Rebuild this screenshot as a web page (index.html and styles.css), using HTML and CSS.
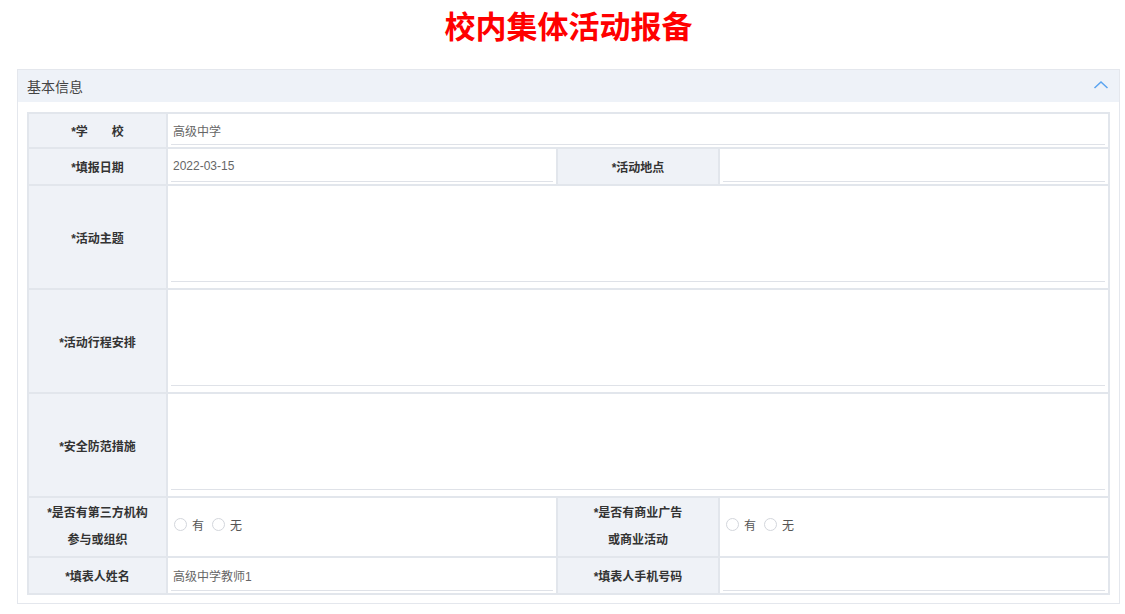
FILE: index.html
```html
<!DOCTYPE html>
<html lang="zh-CN">
<head>
<meta charset="utf-8">
<title>校内集体活动报备</title>
<link rel="stylesheet" href="styles.css">
</head>
<body>
<div class="page">
  <h1 class="title">校内集体活动报备</h1>
  <section class="panel">
    <div class="panel-head">
      <span class="panel-title">基本信息</span>
      <svg class="chevron" width="16" height="10" viewBox="0 0 16 10"><path d="M1.5 8 L8 2 L14.5 8" fill="none" stroke="#5aa4f0" stroke-width="1.5"/></svg>
    </div>
    <div class="panel-body">
      <div class="form">
        <div class="lab r1">*学　　校</div>
        <div class="val span3 r1"><div class="inp">高级中学</div></div>

        <div class="lab r2">*填报日期</div>
        <div class="val r2"><div class="inp">2022-03-15</div></div>
        <div class="lab r2">*活动地点</div>
        <div class="val r2"><div class="inp"></div></div>

        <div class="lab tall">*活动主题</div>
        <div class="val span3 tall"><div class="inp area"></div></div>

        <div class="lab tall">*活动行程安排</div>
        <div class="val span3 tall"><div class="inp area"></div></div>

        <div class="lab tall">*安全防范措施</div>
        <div class="val span3 tall"><div class="inp area"></div></div>

        <div class="lab two r6">*是否有第三方机构<br>参与或组织</div>
        <div class="val radios r6">
          <label class="radio"><span class="dot"></span>有</label>
          <label class="radio"><span class="dot"></span>无</label>
        </div>
        <div class="lab two r6">*是否有商业广告<br>或商业活动</div>
        <div class="val radios r6">
          <label class="radio"><span class="dot"></span>有</label>
          <label class="radio"><span class="dot"></span>无</label>
        </div>

        <div class="lab r7">*填表人姓名</div>
        <div class="val r7"><div class="inp">高级中学教师1</div></div>
        <div class="lab r7">*填表人手机号码</div>
        <div class="val r7"><div class="inp"></div></div>
      </div>
    </div>
  </section>
</div>
</body>
</html>
```

FILE: styles.css
```css
* { box-sizing: border-box; }
html, body {
  margin: 0;
  padding: 0;
  background: #ffffff;
  font-family: "Liberation Sans", "Noto Sans CJK SC", sans-serif;
  color: #333;
}
.page {
  padding: 0 5px 0 17px;
}
.title {
  margin: 9px 0 0 0;
  height: 60px;
  font-family: "Noto Sans CJK SC", sans-serif;
  font-size: 31px;
  line-height: 31px;
  font-weight: 700;
  color: #ff0000;
  text-align: center;
}
.panel {
  border: 1px solid #e4e7ed;
}
.panel-head {
  height: 32px;
  background: #eef2f8;
  display: flex;
  align-items: center;
  justify-content: space-between;
  padding: 0 10px 0 9px;
}
.panel-title {
  font-size: 14px;
  color: #444;
}
.chevron {
  display: block;
  margin-top: -2px;
}
.panel-body {
  padding: 10px 9px 8px 9px;
}
.form {
  display: grid;
  grid-template-columns: 139px 390px 162px 1fr;
  grid-template-rows: 35px 37px 104px 104px 104px 60px 37px;
  border-top: 2px solid #e2e6ec;
  border-left: 2px solid #e2e6ec;
}
.lab, .val {
  border-right: 2px solid #e2e6ec;
  border-bottom: 2px solid #e2e6ec;
}
.lab {
  background: #eff2f7;
  font-size: 12px;
  font-weight: 700;
  color: #333;
  display: flex;
  align-items: center;
  justify-content: center;
  text-align: center;
  white-space: pre;
}
.lab.two {
  line-height: 27px;
}
.val {
  background: #fff;
  display: flex;
  flex-direction: column;
}
.span3 { grid-column: 2 / 5; }
.inp {
  flex: 1;
  margin: 0 3px 2px 3px;
  border-bottom: 1px solid #dfe2e8;
  font-size: 12px;
  color: #666;
  display: flex;
  align-items: center;
  padding: 2px 0 0 2px;
}
.inp.area {
  margin-bottom: 6px;
}
.radios {
  flex-direction: row;
  align-items: center;
  padding: 0 0 5px 6px;
  gap: 8px;
}
.radio {
  display: inline-flex;
  align-items: center;
  font-size: 12px;
  color: #555;
}
.dot {
  display: inline-block;
  width: 13px;
  height: 13px;
  border: 1px solid #d3d6dc;
  border-radius: 50%;
  background: #fff;
  margin-right: 5px;
}
```
